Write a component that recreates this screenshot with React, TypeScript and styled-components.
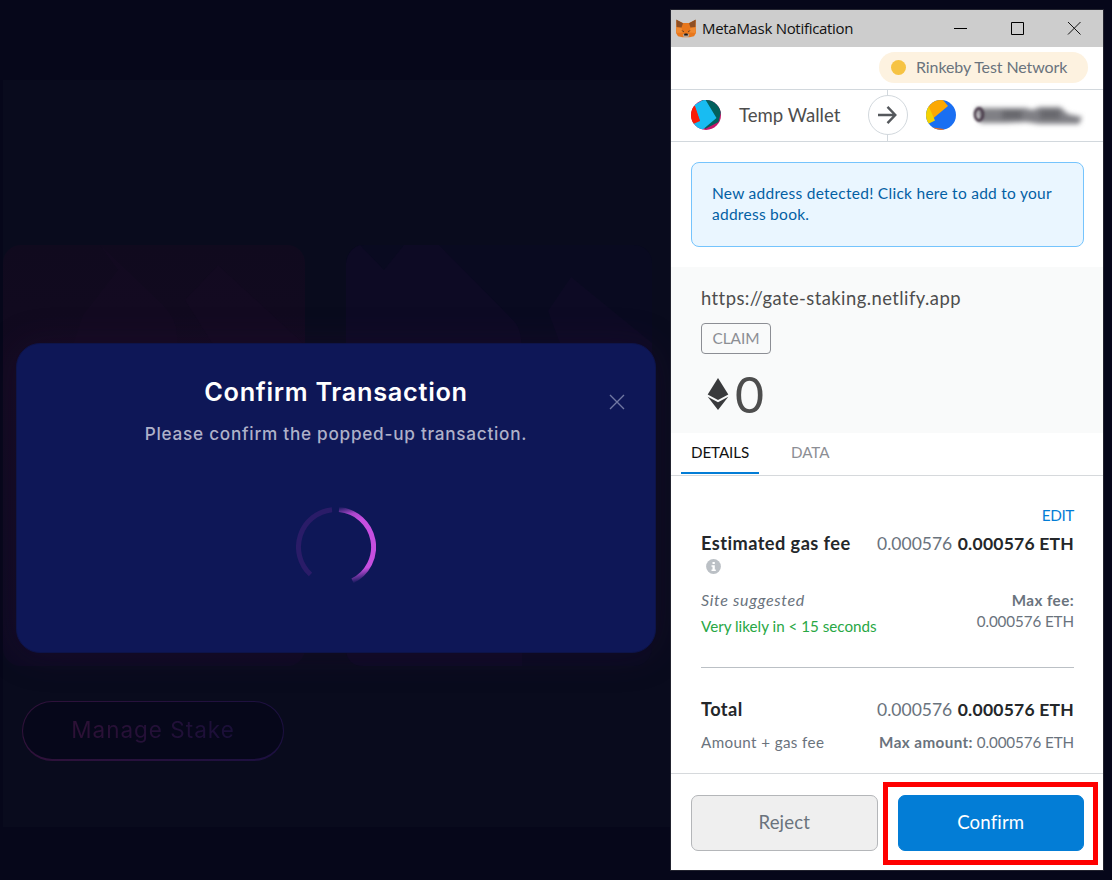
import React from "react";
import styled, { createGlobalStyle } from "styled-components";

const GlobalStyle = createGlobalStyle`
  *, *::before, *::after { box-sizing: border-box; }
  body { margin: 0; background: #06071a; }
  button { font: inherit; cursor: pointer; }
`;

const Desktop = styled.div`
  position: relative;
  width: 1112px;
  height: 880px;
  padding: 80px 0 0 3px;
  overflow: hidden;
  background: #06071a;
  font-family: Lato, "Open Sans", sans-serif;
`;

/* ---------- dimmed staking page ---------- */

const StakePanel = styled.section`
  width: 668px;
  height: 747px;
  padding-top: 165px;
  background: #090b1d;
`;

const PoolCards = styled.div`
  display: flex;
  gap: 41px;
`;

const PoolCard = styled.svg`
  display: block;
  height: 421px;
`;

const ManageButton = styled.button`
  display: flex;
  align-items: center;
  justify-content: center;
  width: 262px;
  height: 60px;
  margin: 35px 0 0 19px;
  padding: 0 0 1px;
  border: solid transparent;
  border-width: 1px 1px 2px;
  border-radius: 30px;
  background:
    linear-gradient(#06071a, #06071a) padding-box,
    linear-gradient(90deg, #30123a, #1c1040) border-box;
`;

const ManageLabel = styled.span`
  font: 400 22.5px/28px Inter, sans-serif;
  letter-spacing: 1px;
  white-space: nowrap;
  color: transparent;
  background: linear-gradient(90deg, #2d1136, #1a0f38);
  background-clip: text;
`;

/* ---------- confirm dialog ---------- */

const Dialog = styled.div`
  position: absolute;
  left: 16px;
  top: 343px;
  width: 640px;
  height: 310px;
  padding-top: 32px;
  display: flex;
  flex-direction: column;
  align-items: center;
  border-radius: 24px;
  background: #0e1757;
  border: 1px solid #0d1449;
  box-shadow: 0 2px 36px rgba(46, 16, 58, 0.3);
  font-family: Inter, sans-serif;
`;

const DialogTitle = styled.h2`
  margin: 0;
  font-size: 25.3px;
  line-height: 32px;
  font-weight: 600;
  letter-spacing: 0.7px;
  white-space: nowrap;
  color: #fff;
`;

const DialogText = styled.p`
  margin: 14px 0 0;
  font-size: 17.2px;
  line-height: 24px;
  font-weight: 500;
  letter-spacing: 0.73px;
  white-space: nowrap;
  color: #aeb1c9;
`;

const DialogClose = styled.button`
  position: absolute;
  right: 30px;
  top: 50px;
  width: 16px;
  height: 16px;
  padding: 0;
  border: 0;
  background: none;
  svg { display: block; }
`;

const Spinner = styled.svg`
  display: block;
  margin-top: 61px;
`;

/* ---------- wallet window ---------- */

const Window = styled.div`
  position: absolute;
  left: 671px;
  top: 10px;
  width: 432px;
  height: 860px;
  display: flex;
  flex-direction: column;
  background: #fff;
  box-shadow: 0 0 0 1px #22232f;
`;

const TitleBar = styled.header`
  display: flex;
  align-items: center;
  height: 37px;
  flex: none;
  padding: 0 22px 1px 5px;
  background: #cdcdcd;
`;

const WindowTitle = styled.div`
  flex: 1;
  margin-left: 6px;
  font: 400 15px/20px "Open Sans", sans-serif;
  letter-spacing: -0.3px;
  color: #111;
`;

const WindowControls = styled.div`
  display: flex;
  gap: 43px;
  svg { display: block; }
`;

const NetworkRow = styled.div`
  display: flex;
  justify-content: flex-end;
  height: 43px;
  flex: none;
  padding: 5px 15px 0 0;
  border-bottom: 1px solid #d2d8dd;
`;

const NetworkPill = styled.div`
  display: flex;
  align-items: center;
  width: 209px;
  height: 31px;
  padding-left: 12px;
  border-radius: 16px;
  background: #fdf2e0;
  color: #6a737d;
  font-size: 16px;
  line-height: 29px;
  letter-spacing: -0.1px;
  white-space: nowrap;
`;

const NetworkLabel = styled.span`
  margin-bottom: 2px;
`;

const NetworkDot = styled.span`
  width: 15px;
  height: 15px;
  margin-right: 10px;
  border-radius: 50%;
  background: #f6c343;
`;

const Participants = styled.div`
  display: flex;
  height: 52px;
  flex: none;
  border-bottom: 1px solid #d2d8dd;
`;

const Participant = styled.div<{ $start: number }>`
  display: flex;
  align-items: center;
  width: 216px;
  padding: 0 0 1px ${(p) => p.$start}px;
  & + & { border-left: 1px solid #d2d8dd; }
  svg { display: block; flex: none; }
`;

const WalletName = styled.span`
  margin: 0 0 1px 18px;
  font-size: 18.6px;
  color: #4d4d4d;
`;

const RedactedName = styled.svg`
  margin-left: 10px;
`;

const ArrowBadge = styled.div`
  position: absolute;
  left: 197px;
  top: 85px;
  width: 40px;
  height: 40px;
  display: grid;
  place-items: center;
  padding-right: 2px;
  border: 1px solid #d2d8dd;
  border-radius: 50%;
  background: #fff;
`;

const Notice = styled.a`
  display: block;
  height: 85px;
  flex: none;
  margin: 20px 19px 20px 20px;
  padding: 20px 20px;
  border: 1px solid #75c4fd;
  border-radius: 8px;
  background: #eaf6ff;
  font-size: 15.5px;
  line-height: 21px;
  letter-spacing: 0.27px;
  white-space: nowrap;
  color: #0260a4;
`;

const Summary = styled.section`
  height: 166px;
  flex: none;
  padding: 18px 30px 0;
  background: #f9fafa;
`;

const Origin = styled.div`
  font-size: 18.4px;
  line-height: 26px;
  letter-spacing: 0.44px;
  color: #4d4d4d;
`;

const ActionTag = styled.div`
  width: 70px;
  height: 31px;
  margin-top: 12px;
  border: 1px solid #8c8e94;
  border-radius: 4px;
  text-align: center;
  font-size: 15.4px;
  line-height: 29px;
  color: #8c8e94;
`;

const Amount = styled.div`
  display: flex;
  align-items: center;
  height: 50px;
  margin-top: 15px;
  padding-left: 6px;
  svg { display: block; }
`;

const AmountValue = styled.span`
  margin: 0 0 1px 6px;
  font: 400 50px/50px Lato, sans-serif;
  color: #4d4d4d;
`;

const Tabs = styled.nav`
  display: flex;
  height: 43px;
  flex: none;
  padding-left: 10px;
  border-bottom: 1px solid #d6d9dc;
`;

const Tab = styled.div<{ $active?: boolean }>`
  height: 41px;
  margin-right: 22px;
  padding: 0 10px;
  border-bottom: 2px solid ${(p) => (p.$active ? "#037dd6" : "transparent")};
  font-size: 15.2px;
  line-height: 39px;
  letter-spacing: -0.1px;
  color: ${(p) => (p.$active ? "#111" : "#8c8e94")};
`;

const Details = styled.section`
  flex: 1;
  padding: 27px 29px 0 30px;
  color: #6a737d;
`;

const Line = styled.div<{ $height: number; $gap?: number }>`
  display: flex;
  align-items: center;
  justify-content: space-between;
  height: ${(p) => p.$height}px;
  margin-top: ${(p) => p.$gap ?? 0}px;
  white-space: nowrap;
`;

const EditLink = styled.a`
  margin-left: auto;
  font-size: 15.3px;
  letter-spacing: -0.4px;
  color: #037dd6;
`;

const Heading = styled.span`
  font-size: 18.2px;
  font-weight: 700;
  letter-spacing: 0.44px;
  color: #24272a;
`;

const Price = styled.span`
  font-size: 17.5px;
  b {
    margin-left: 1px;
    font-weight: 700;
    letter-spacing: 0.23px;
    color: #24272a;
  }
`;

const Small = styled.span<{ $italic?: boolean; $color?: string; $spacing?: number }>`
  font-size: ${(p) => (p.$italic ? 16 : 15.2)}px;
  font-style: ${(p) => (p.$italic ? "italic" : "normal")};
  letter-spacing: ${(p) => p.$spacing ?? 0}px;
  color: ${(p) => p.$color ?? "#6a737d"};
  b { letter-spacing: 0.42px; }
`;

const GasMeta = styled.div`
  display: flex;
  justify-content: space-between;
  margin-top: 15px;
`;

const MetaColumn = styled.div<{ $end?: boolean; $step: number }>`
  display: flex;
  flex-direction: column;
  align-items: ${(p) => (p.$end ? "flex-end" : "flex-start")};
  line-height: 24px;
  white-space: nowrap;
  & > * + * { margin-top: ${(p) => p.$step}px; }
`;

const Divider = styled.hr`
  height: 1px;
  margin: 29px 0 27px;
  border: 0;
  background: #bbc0c5;
`;

const Footer = styled.footer`
  display: flex;
  gap: 20px;
  height: 97px;
  flex: none;
  padding: 21px 19px 0 20px;
  border-top: 1px solid #d6d9dc;
`;

const FooterButton = styled.button<{ $primary?: boolean }>`
  flex: 1;
  height: 56px;
  padding: 0 0 3px;
  border: 1px solid ${(p) => (p.$primary ? "#037dd6" : "#b4b6b9")};
  border-radius: 7px;
  background: ${(p) => (p.$primary ? "#037dd6" : "#efefef")};
  color: ${(p) => (p.$primary ? "#fff" : "#6a737d")};
  font-size: 18.6px;
  letter-spacing: 0.15px;
`;

const Highlight = styled.div`
  position: absolute;
  left: 883px;
  top: 782px;
  width: 215px;
  height: 83px;
  border: 5px solid #fe0000;
  pointer-events: none;
`;

const Fox = () => (
  <svg width="20" height="19" viewBox="0 0 20 19">
    <path d="M.3 1 7 4h6l6.700-3 .1 8L20 14l-2 3.300-4.500 1h-7L2 17.300 0 14l.2-5z" fill="#e8771c" />
    <path d="M.3.5 7 4.300 5.500 8.500.6 8zM19.700.5 13 4.300l1.500 4.200 4.900-.5z" fill="#8f5024" />
    <path d="m.6 8.500 4.900.5 1.500 4.500-6.600.5zM19.400 8.500l-4.900.5-1.500 4.500 6.600.5z" fill="#f08a30" />
    <path d="m5.300 11.200 2.500.8-.2 1.200zM14.700 11.200l-2.500.8.2 1.200z" fill="#4a3020" />
    <path d="m6.800 15.500 1.400-.8h3.600l1.400.8-.2 1.700-1.200.8H8.200L7 17.200z" fill="#b9a594" />
    <path d="m8.200 15 .5-.5h2.600l.5.5v1.600H8.200z" fill="#1d1714" />
  </svg>
);

const SenderAvatar = () => (
  <svg width="30" height="30" viewBox="0 0 30 30">
    <clipPath id="sender"><circle cx="15" cy="15" r="15" /></clipPath>
    <g clipPath="url(#sender)">
      <path fill="#c8146a" d="M0 0h30v30H0z" />
      <path fill="#03605d" d="M10-2h20v14l-2.500 10L14 29z" />
      <path fill="#18bcf2" d="M3 5 14-1l11.500 19L13 28.500 10 31H-2V22l11-1z" />
      <path fill="#fb1b05" d="M-1 6h5l5 15-9 4z" />
    </g>
  </svg>
);

const RecipientAvatar = () => (
  <svg width="30" height="30" viewBox="0 0 30 30">
    <clipPath id="recipient"><circle cx="15" cy="15" r="15" /></clipPath>
    <g clipPath="url(#recipient)">
      <path fill="#1a6ff2" d="M0 0h30v30H0z" />
      <path fill="#fba803" d="M0 0h17l5 6L7 18.500 2 8z" />
      <path fill="#f3d203" d="M-1 7 3 7l6 13.500L2 24l-3-4z" />
      <path fill="#f2701e" d="m7 27.500 11 1.500v2H7z" />
    </g>
  </svg>
);

const App = () => (
  <>
    <GlobalStyle />
    <Desktop>
      <StakePanel>
        <PoolCards>
          <PoolCard width="302" viewBox="0 0 302 421">
            <defs>
              <linearGradient id="warm" x1="0" y1="0" x2="0" y2="1">
                <stop offset="0" stopColor="#100a1e" />
                <stop offset="0.3" stopColor="#120a20" />
                <stop offset="1" stopColor="#0d0a22" />
              </linearGradient>
            </defs>
            <rect width="302" height="421" rx="18" fill="url(#warm)" />
            <path d="M97 0 160 60q14 15 14 30v40H60L80 70l35-45z" fill="#160b24" opacity="0.35" />
            <path d="m215 20 87 80v50h-60l-60-95z" fill="#160b24" opacity="0.35" />
          </PoolCard>
          <PoolCard width="306" viewBox="0 0 306 421">
            <rect width="306" height="421" rx="18" fill="#090a20" />
            <path d="M0 18Q2 4 14 0l24 25L58 0h35l75 76q8 8 8 34v311H18Q0 421 0 403V50l25 22 20-14 40 42H0z" fill="#0d0a24" />
            <path d="m225 32 81 66v60h-70l-34-92z" fill="#0d0a24" />
          </PoolCard>
        </PoolCards>
        <ManageButton><ManageLabel>Manage Stake</ManageLabel></ManageButton>
      </StakePanel>

      <Dialog role="dialog">
        <DialogTitle>Confirm Transaction</DialogTitle>
        <DialogText>Please confirm the popped-up transaction.</DialogText>
        <DialogClose aria-label="Close">
          <svg width="16" height="16" viewBox="0 0 16 16" stroke="#7078a2" strokeWidth="1.4">
            <path d="m1 1 14 14M15 1 1 15" />
          </svg>
        </DialogClose>
        <Spinner width="80" height="80" viewBox="0 0 80 80" fill="none" strokeWidth="5">
          <defs>
            <linearGradient id="arc" gradientUnits="userSpaceOnUse" x1="42" y1="0" x2="60" y2="78">
              <stop offset="0" stopColor="#c64fe0" stopOpacity="0" />
              <stop offset="0.12" stopColor="#c64fe0" stopOpacity="0.85" />
              <stop offset="0.22" stopColor="#c64fe0" />
              <stop offset="0.82" stopColor="#c64fe0" />
              <stop offset="0.96" stopColor="#c64fe0" stopOpacity="0.1" />
            </linearGradient>
          </defs>
          <path d="M36 2.700A37.500 37.500 0 0 0 14.500 67.500" stroke="#2a1c68" />
          <path d="M43 2.600A37.500 37.500 0 0 1 56.500 73.700" stroke="url(#arc)" />
        </Spinner>
      </Dialog>

      <Window>
        <TitleBar>
          <Fox />
          <WindowTitle>MetaMask Notification</WindowTitle>
          <WindowControls>
            <svg width="14" height="14" viewBox="0 0 14 14"><path d="M1 7.500h13" stroke="#000" /></svg>
            <svg width="14" height="14" viewBox="0 0 14 14"><path d="M1.500 1.500h12v12h-12z" fill="none" stroke="#000" /></svg>
            <svg width="14" height="14" viewBox="0 0 14 14"><path d="m1 1 12.500 12.500M13.500 1 1 13.500" stroke="#111" /></svg>
          </WindowControls>
        </TitleBar>

        <NetworkRow>
          <NetworkPill><NetworkDot /><NetworkLabel>Rinkeby Test Network</NetworkLabel></NetworkPill>
        </NetworkRow>

        <Participants>
          <Participant $start={20}>
            <SenderAvatar />
            <WalletName>Temp Wallet</WalletName>
          </Participant>
          <Participant $start={38}>
            <RecipientAvatar />
            <RedactedName width="120" height="34" viewBox="0 0 120 34" aria-hidden>
              <defs>
                <filter id="smudge" x="-20%" y="-50%" width="140%" height="200%"><feGaussianBlur stdDeviation="2.600" /></filter>
                <filter id="smudgeFine" x="-50%" y="-50%" width="200%" height="200%"><feGaussianBlur stdDeviation="1.300" /></filter>
              </defs>
              <g filter="url(#smudge)">
                <path d="M10 10h50l6 2 8-3h20l8 7 14 3-3 7H74l-14-2-20 1H14z" fill="#808085" />
                <path d="M36 12h20v9H36zM74 12h20v9H74z" fill="#68686d" />
              </g>
              <ellipse cx="13" cy="16.500" rx="4" ry="6" fill="none" stroke="#4a3b4a" strokeWidth="2.800" filter="url(#smudgeFine)" />
            </RedactedName>
          </Participant>
          <ArrowBadge>
            <svg width="20" height="20" viewBox="0 0 20 20" fill="none" stroke="#55585c" strokeWidth="2.400">
              <path d="M1 10h17M10.500 1.800 18.300 10l-7.800 8.200" />
            </svg>
          </ArrowBadge>
        </Participants>

        <Notice>
          New address detected! Click here to add to your
          <br />
          address book.
        </Notice>

        <Summary>
          <Origin>https://gate-staking.netlify.app</Origin>
          <ActionTag>CLAIM</ActionTag>
          <Amount>
            <svg width="22" height="32" viewBox="0 0 22 32" fill="#393a3c">
              <path d="m11 0 10.300 16.500L11 22 .7 16.500z" />
              <path d="m.7 18.800 10.300 5.500 10.300-5.500L11 32z" />
            </svg>
            <AmountValue>0</AmountValue>
          </Amount>
        </Summary>

        <Tabs>
          <Tab $active>DETAILS</Tab>
          <Tab>DATA</Tab>
        </Tabs>

        <Details>
          <Line $height={24}><EditLink>EDIT</EditLink></Line>
          <Line $height={32}>
            <Heading>Estimated gas fee</Heading>
            <Price>0.000576 <b>0.000576 ETH</b></Price>
          </Line>
          <Line $height={14}>
            <svg width="26" height="15" viewBox="-5 0 26 15">
              <circle cx="7.500" cy="7.500" r="7.400" fill="#bbc0c5" />
              <path d="M6.500 3h2.300v2H6.500zM5.500 6.200h3.300v4.300h1v1.500H5.500v-1.500h1V7.700h-1z" fill="#fff" />
            </svg>
          </Line>
          <GasMeta>
            <MetaColumn $step={2}>
              <Small $italic $spacing={0.68}>Site suggested</Small>
              <Small $color="#28a745">Very likely in &lt; 15 seconds</Small>
            </MetaColumn>
            <MetaColumn $end $step={-3}>
              <Small><b>Max fee:</b></Small>
              <Small $spacing={-0.1}>0.000576 ETH</Small>
            </MetaColumn>
          </GasMeta>
          <Divider />
          <Line $height={28}>
            <Heading>Total</Heading>
            <Price>0.000576 <b>0.000576 ETH</b></Price>
          </Line>
          <Line $height={24} $gap={7}>
            <Small $spacing={0.38}>Amount + gas fee</Small>
            <Small $spacing={-0.1}><b>Max amount:</b> 0.000576 ETH</Small>
          </Line>
        </Details>

        <Footer>
          <FooterButton>Reject</FooterButton>
          <FooterButton $primary>Confirm</FooterButton>
        </Footer>
      </Window>
      <Highlight />
    </Desktop>
  </>
);

export default App;
